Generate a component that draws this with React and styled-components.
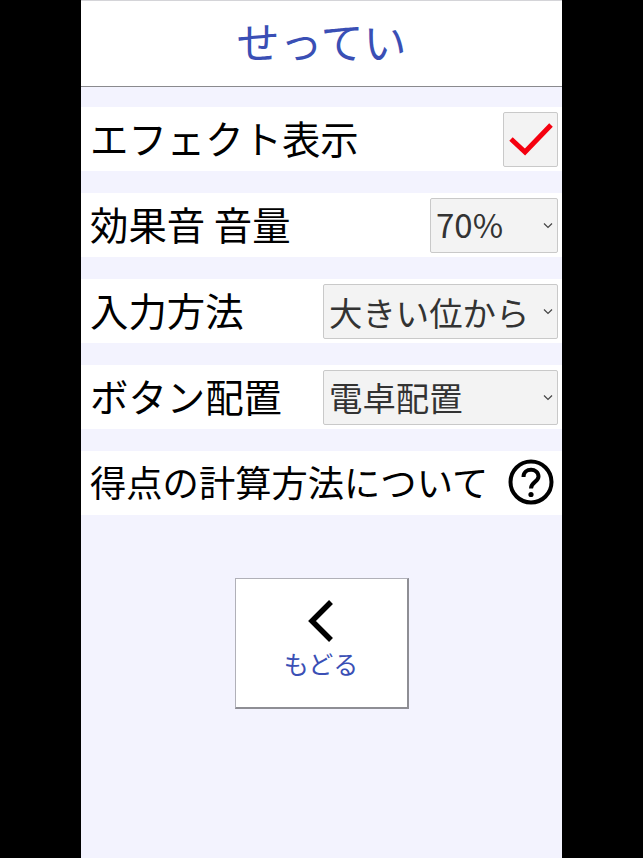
import React from "react";
import styled, { createGlobalStyle } from "styled-components";

const Global = createGlobalStyle`
  html, body { margin: 0; padding: 0; background: #000; }
  body { font-family: "Noto Sans CJK JP", "Noto Sans", sans-serif; }
  * { box-sizing: border-box; }
`;

const Screen = styled.div`
  width: 643px;
  height: 858px;
  overflow: hidden;
  background: #000;
  padding-left: 81px;
`;

const Panel = styled.main`
  width: 481px;
  height: 858px;
  background: #f3f3fe;
  display: flex;
  flex-direction: column;
`;

const Header = styled.header`
  height: 87px;
  flex: none;
  background: #fff;
  border-top: 1px solid #d4d4d8;
  border-bottom: 1px solid #8a8a8e;
  display: flex;
  align-items: center;
  justify-content: center;
  padding-bottom: 6px;
`;

const Title = styled.h1`
  margin: 0;
  font-size: 43px;
  font-weight: 400;
  line-height: 1;
  color: #3a4fb5;
`;

const Rows = styled.section`
  display: flex;
  flex-direction: column;
  gap: 22px;
  padding-top: 20px;
`;

const Row = styled.div`
  height: 64px;
  background: #fff;
  display: flex;
  align-items: center;
  justify-content: space-between;
  padding: 0 4px 0 9px;
`;

const Label = styled.span`
  font-size: ${(p) => p.$size || 38.4}px;
  line-height: 1;
  color: #000;
  white-space: nowrap;
  padding-bottom: 4px;
`;

const CheckBox = styled.button`
  width: 55px;
  height: 55px;
  padding: 0;
  background: #f3f3f3;
  border: 1px solid #c9c9c9;
  border-radius: 2px;
  display: flex;
  align-items: center;
  justify-content: center;
`;

const SelectWrap = styled.div`
  position: relative;
  width: ${(p) => p.$width}px;
  height: 55px;
`;

const Select = styled.select`
  appearance: none;
  width: 100%;
  height: 100%;
  margin: 0;
  padding: 0 0 ${(p) => p.$lift || 0}px 5px;
  font-family: inherit;
  font-size: ${(p) => p.$size || 33.4}px;
  color: #333;
  background: #f3f3f3;
  border: 1px solid #c9c9c9;
  border-radius: 2px;
  outline: none;
`;

const Caret = styled.svg`
  position: absolute;
  right: 5px;
  top: 24px;
  width: 10px;
  height: 7px;
  pointer-events: none;
`;

const HelpIcon = styled.svg`
  width: 46px;
  height: 46px;
  flex: none;
  margin-right: 4px;
  margin-bottom: 2px;
`;

const BackArea = styled.div`
  display: flex;
  justify-content: center;
  padding-top: 63px;
`;

const BackButton = styled.button`
  width: 174px;
  height: 131px;
  padding: 0;
  background: #fff;
  border: 1px solid #b0b0b8;
  border-right: 2px solid #8e8e94;
  border-bottom: 2px solid #8e8e94;
  display: flex;
  flex-direction: column;
  align-items: center;
  font-family: inherit;
`;

const BackIcon = styled.svg`
  width: 30px;
  height: 44px;
  margin-top: 20px;
`;

const BackText = styled.span`
  font-size: 25px;
  line-height: 1;
  color: #3a4fb5;
  margin-top: 8px;
`;

function Dropdown({ width, size, lift, value, options }) {
  return (
    <SelectWrap $width={width}>
      <Select $size={size} $lift={lift} defaultValue={value}>
        {options.map((o) => (
          <option key={o}>{o}</option>
        ))}
      </Select>
      <Caret viewBox="0 0 10 7">
        <path d="M1 1.5 L5 5.5 L9 1.5" fill="none" stroke="#444" strokeWidth="1.2" />
      </Caret>
    </SelectWrap>
  );
}

export default function App() {
  return (
    <Screen>
      <Global />
      <Panel>
        <Header>
          <Title>せってい</Title>
        </Header>
        <Rows>
          <Row>
            <Label>エフェクト表示</Label>
            <CheckBox aria-label="エフェクト表示">
              <svg width="46" height="36" viewBox="0 0 46 36">
                <path d="M3 18 L17 31 L43 4" fill="none" stroke="#f5000f" strokeWidth="5" />
              </svg>
            </CheckBox>
          </Row>
          <Row>
            <Label>効果音 音量</Label>
            <Dropdown width={128} size={33} lift={3} value="70%" options={["0%", "30%", "50%", "70%", "100%"]} />
          </Row>
          <Row>
            <Label>入力方法</Label>
            <Dropdown width={235} value="大きい位から" options={["大きい位から", "小さい位から"]} />
          </Row>
          <Row>
            <Label>ボタン配置</Label>
            <Dropdown width={235} lift={2} value="電卓配置" options={["電卓配置", "電話配置"]} />
          </Row>
          <Row>
            <Label $size={36.3}>得点の計算方法について</Label>
            <HelpIcon viewBox="0 0 46 46">
              <circle cx="23" cy="23" r="20.5" fill="none" stroke="#000" strokeWidth="4" />
              <path
                d="M15.5 18 C15.5 8.5 30.5 8.5 30.5 17.5 C30.5 23 23 23 23 29.5"
                fill="none"
                stroke="#000"
                strokeWidth="4"
              />
              <circle cx="23" cy="35.5" r="2.6" fill="#000" />
            </HelpIcon>
          </Row>
        </Rows>
        <BackArea>
          <BackButton>
            <BackIcon viewBox="0 0 30 44">
              <path d="M25 3 L6 22 L25 41" fill="none" stroke="#000" strokeWidth="5.5" />
            </BackIcon>
            <BackText>もどる</BackText>
          </BackButton>
        </BackArea>
      </Panel>
    </Screen>
  );
}
